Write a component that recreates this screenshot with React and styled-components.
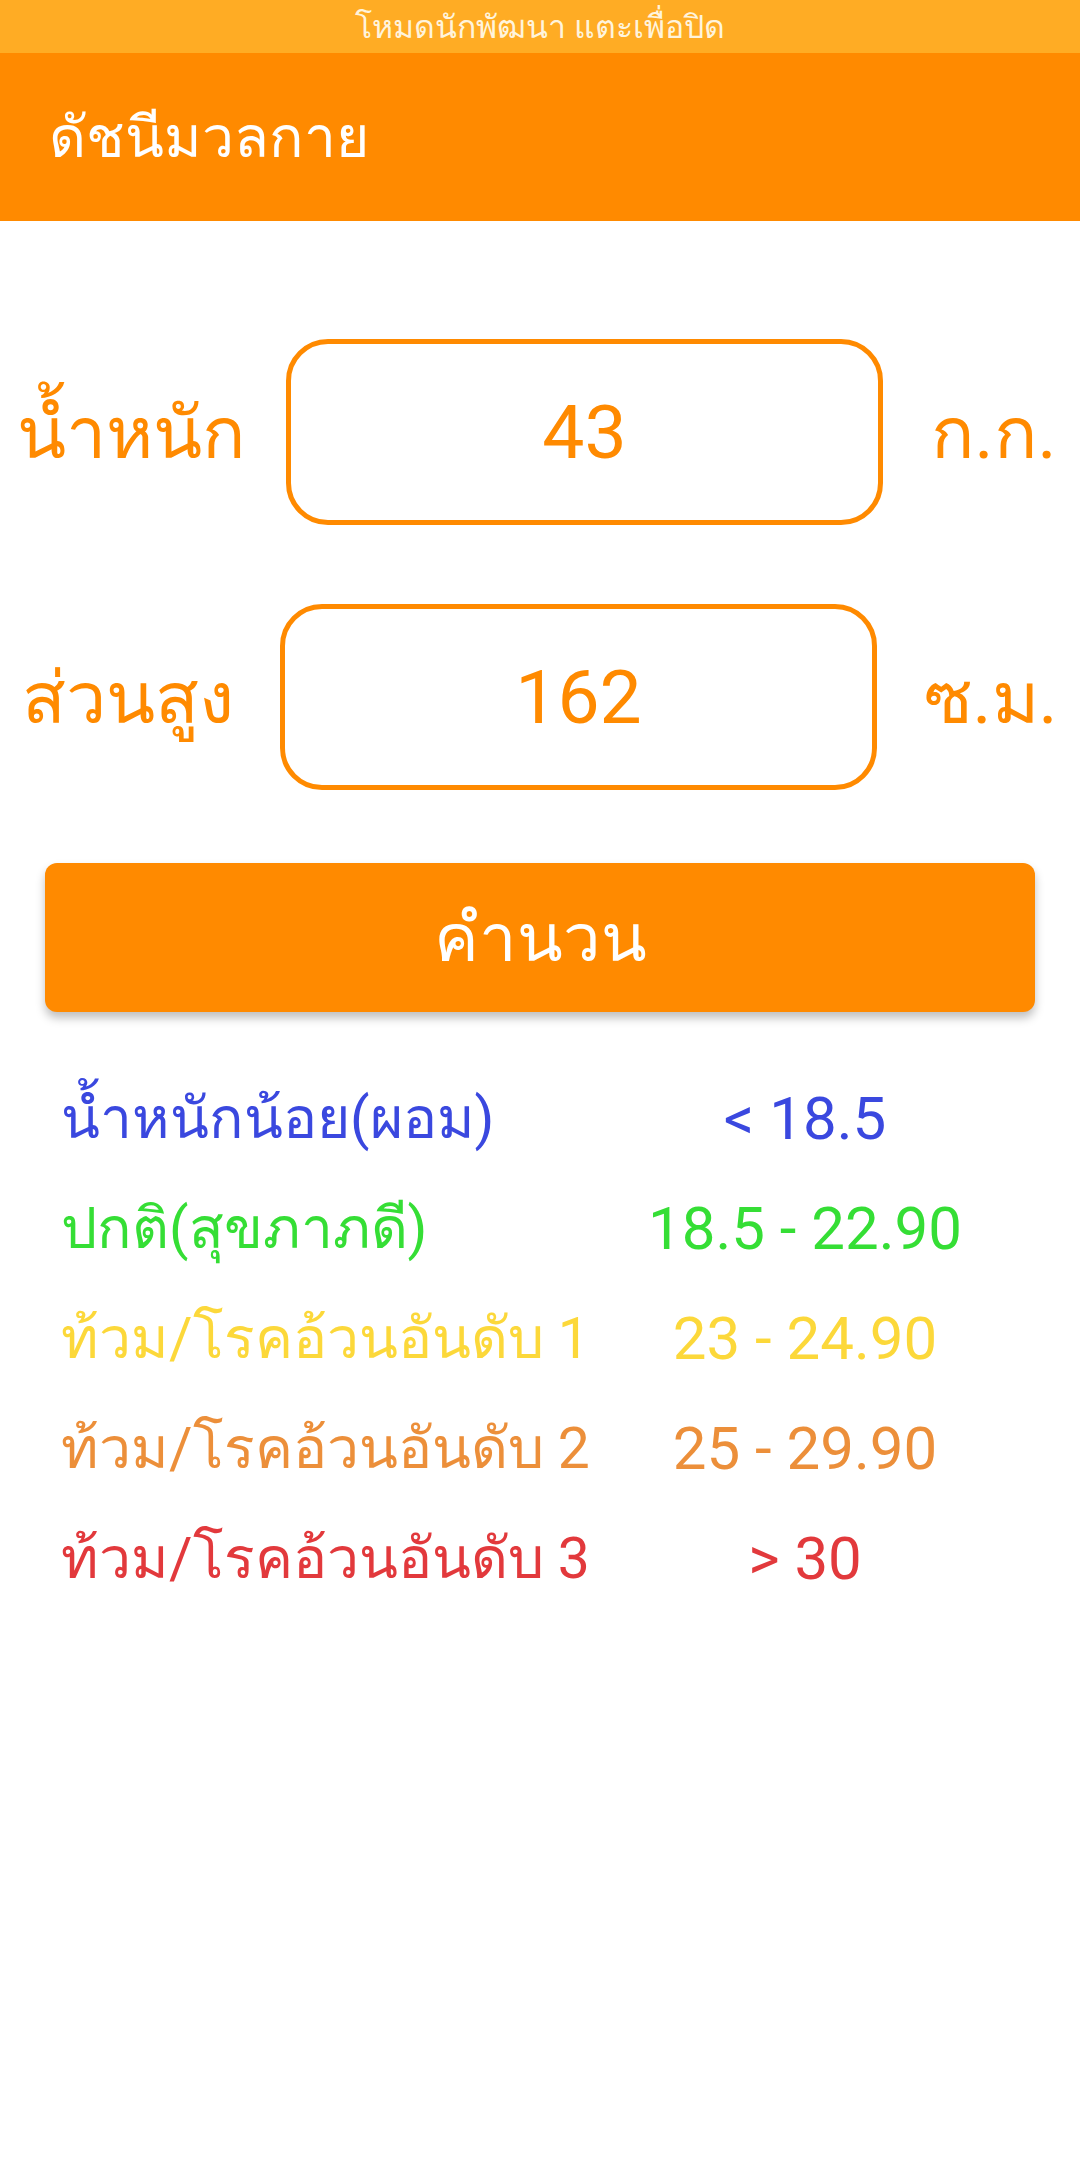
import styled, { createGlobalStyle } from "styled-components";

const GlobalStyle = createGlobalStyle`
  html, body {
    margin: 0;
    padding: 0;
    background: #ffffff;
  }
  body {
    font-family: Roboto, "Noto Sans", "DejaVu Sans", sans-serif;
  }
`;

const ORANGE = "#ff8a00";

const ranges = [
  { label: "น้ำหนักน้อย(ผอม)", value: "< 18.5", color: "#3a48df" },
  { label: "ปกติ(สุขภาภดี)", value: "18.5 - 22.90", color: "#35de35" },
  { label: "ท้วม/โรคอ้วนอันดับ 1", value: "23 - 24.90", color: "#fcd83a" },
  { label: "ท้วม/โรคอ้วนอันดับ 2", value: "25 - 29.90", color: "#ec8f3a" },
  { label: "ท้วม/โรคอ้วนอันดับ 3", value: "> 30", color: "#e2393c" },
];

export default function App() {
  return (
    <Screen>
      <GlobalStyle />
      <DevBanner>โหมดนักพัฒนา แตะเพื่อปิด</DevBanner>
      <AppBar>
        <Title>ดัชนีมวลกาย</Title>
      </AppBar>

      <Form>
        <FieldRow $labelWidth={262}>
          <FieldLabel>น้ำหนัก</FieldLabel>
          <Field>43</Field>
          <Unit>ก.ก.</Unit>
        </FieldRow>
        <FieldRow $labelWidth={256}>
          <FieldLabel>ส่วนสูง</FieldLabel>
          <Field>162</Field>
          <Unit>ซ.ม.</Unit>
        </FieldRow>
      </Form>

      <CalcButton>คำนวน</CalcButton>

      <Legend>
        {ranges.map((r) => (
          <LegendRow key={r.label} $color={r.color}>
            <LegendLabel>{r.label}</LegendLabel>
            <LegendValue>{r.value}</LegendValue>
          </LegendRow>
        ))}
      </Legend>
    </Screen>
  );
}

const Screen = styled.div`
  width: 1080px;
  min-height: 2160px;
  background: #fff;
  display: flex;
  flex-direction: column;
`;

const DevBanner = styled.div`
  height: 53px;
  background: #ffac24;
  color: #fff4dc;
  font-size: 32px;
  display: flex;
  align-items: center;
  justify-content: center;
`;

const AppBar = styled.div`
  height: 168px;
  background: ${ORANGE};
  display: flex;
  align-items: center;
  padding-left: 49px;
`;

const Title = styled.h1`
  margin: 0;
  font-size: 57px;
  font-weight: 400;
  color: #fff;
`;

const Form = styled.div`
  margin-top: 118px;
  display: flex;
  flex-direction: column;
  gap: 79px;
`;

const FieldRow = styled.div`
  display: grid;
  grid-template-columns: ${(p) => p.$labelWidth}px 597px 1fr;
  column-gap: 24px;
  align-items: center;
  color: ${ORANGE};
  font-size: 72px;
`;

const FieldLabel = styled.div`
  text-align: center;
  white-space: nowrap;
`;

const Field = styled.div`
  height: 176px;
  border: 5px solid ${ORANGE};
  border-radius: 42px;
  display: flex;
  align-items: center;
  justify-content: center;
  font-size: 75px;
`;

const Unit = styled.div`
  text-align: center;
  white-space: nowrap;
`;

const CalcButton = styled.button`
  margin: 73px 45px 0;
  height: 149px;
  border: none;
  border-radius: 12px;
  background: ${ORANGE};
  color: #fff;
  font-family: inherit;
  font-size: 67px;
  box-shadow: 0 6px 10px rgba(0, 0, 0, 0.25);
`;

const Legend = styled.div`
  margin-top: 51px;
  padding: 0 30px 0 61px;
  display: flex;
  flex-direction: column;
`;

const LegendRow = styled.div`
  display: grid;
  grid-template-columns: minmax(0, 1fr) 490px;
  height: 110px;
  align-items: center;
  font-size: 60px;
  color: ${(p) => p.$color};
  white-space: nowrap;
`;

const LegendLabel = styled.span`
  font-size: 57px;
`;

const LegendValue = styled.span`
  text-align: center;
`;
